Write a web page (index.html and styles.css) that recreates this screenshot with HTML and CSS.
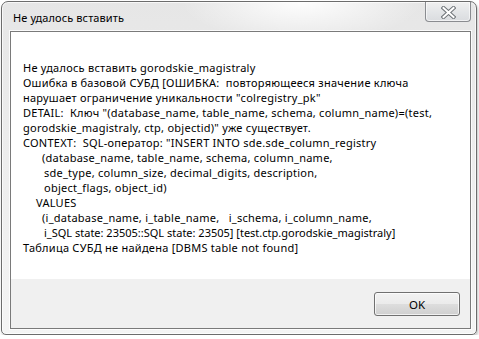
FILE: index.html
```html
<!DOCTYPE html>
<html lang="ru">
<head>
    <meta charset="UTF-8">
    <title>Не удалось вставить</title>
    <link rel="stylesheet" href="styles.css">
</head>
<body>
    <div class="window">
        <div class="titlebar">
            <span class="title">Не удалось вставить</span>
            <button class="close-button" aria-label="Закрыть">
                <svg width="15" height="13" viewBox="0 0 15 13">
                    <path d="M2.5 2 L12.5 11 M12.5 2 L2.5 11" stroke="#6f7478" stroke-width="4" stroke-linecap="square" fill="none"/>
                    <path d="M2.5 2 L12.5 11 M12.5 2 L2.5 11" stroke="#ffffff" stroke-width="2" stroke-linecap="square" fill="none"/>
                </svg>
            </button>
        </div>

        <div class="client">
            <div class="message">
                <div class="line">Не удалось вставить gorodskie_magistraly</div>
                <div class="line">Ошибка в базовой СУБД [ОШИБКА:&nbsp; повторяющееся значение ключа</div>
                <div class="line">нарушает ограничение уникальности "colregistry_pk"</div>
                <div class="line">DETAIL:&nbsp; Ключ "(database_name, table_name, schema, column_name)=(test,</div>
                <div class="line">gorodskie_magistraly, ctp, objectid)" уже существует.</div>
                <div class="line">CONTEXT:&nbsp; SQL-оператор: "INSERT INTO sde.sde_column_registry</div>
                <div class="line indent-2">(database_name, table_name, schema, column_name,</div>
                <div class="line indent-3">sde_type, column_size, decimal_digits, description,</div>
                <div class="line indent-3">object_flags, object_id)</div>
                <div class="line indent-1">VALUES</div>
                <div class="line indent-2">(i_database_name, i_table_name, &nbsp; i_schema, i_column_name,</div>
                <div class="line indent-3 tight">i_SQL state: 23505::SQL state: 23505] [test.ctp.gorodskie_magistraly]</div>
                <div class="line">Таблица СУБД не найдена [DBMS table not found]</div>
            </div>
            <div class="footer">
                <button class="ok-button">OK</button>
            </div>
        </div>
    </div>
</body>
</html>
```

FILE: styles.css
```css
* {
    margin: 0;
    padding: 0;
    box-sizing: border-box;
}

body {
    background: #ffffff;
    font-family: 'Noto Sans', 'Open Sans', sans-serif;
    font-size: 11px;
    letter-spacing: 0.25px;
    color: #000;
    padding: 1px 0 0 1px;
}

/* Aero style window frame */
.window {
    width: 476px;
    height: 334px;
    border: 1px solid #6c6c6c;
    border-radius: 7px 7px 5px 5px;
    padding: 0 5px 5px 8px;
    display: flex;
    flex-direction: column;
    background:
        radial-gradient(ellipse 120px 40px at 300px 0, rgba(255,255,255,0.95), rgba(255,255,255,0) 100%),
        linear-gradient(180deg, #e6e6e6 0%, #ececec 40%, #f4f4f4 100%);
    box-shadow: inset 0 0 0 1px rgba(255,255,255,0.7), 1px 2px 3px rgba(0,0,0,0.25);
}

.titlebar {
    height: 29px;
    display: flex;
    justify-content: space-between;
    align-items: flex-start;
}

.title {
    margin-top: 8px;
    margin-left: 3px;
    line-height: 15px;
    font-size: 11px;
    letter-spacing: 0.1px;
}

.close-button {
    width: 46px;
    height: 20px;
    border: 1px solid #8a8c90;
    border-top: none;
    border-radius: 0 0 4px 4px;
    background: linear-gradient(180deg, #f0f0f0 0%, #e4e6e8 50%, #dadcdf 100%);
    box-shadow: inset 0 0 0 1px rgba(255,255,255,0.6);
    display: flex;
    align-items: center;
    justify-content: center;
    padding-top: 1px;
}

.client {
    flex: 1;
    display: flex;
    flex-direction: column;
    border: 1px solid #7a7a7a;
    box-shadow: 0 0 0 1px rgba(255,255,255,0.8);
}

.message {
    flex: 1;
    background: #ffffff;
    padding: 28px 0 0 12px;
}

.line {
    line-height: 15px;
    white-space: nowrap;
}

.tight { letter-spacing: 0; }

.indent-1 { padding-left: 13px; }
.indent-2 { padding-left: 19px; }
.indent-3 { padding-left: 21px; }

.footer {
    height: 49px;
    background: #f0f0f0;
    display: flex;
    justify-content: flex-end;
    align-items: flex-start;
    padding: 13px 10px 0 0;
}

.ok-button {
    width: 86px;
    height: 24px;
    border: 1px solid #707070;
    border-radius: 3px;
    background: linear-gradient(180deg, #f2f2f2 0%, #ebebeb 48%, #dddddd 52%, #cfcfcf 100%);
    box-shadow: inset 0 0 0 1px rgba(255,255,255,0.7);
    font-family: 'Noto Sans', 'Open Sans', sans-serif;
    font-size: 11.5px;
    color: #000;
}
```
